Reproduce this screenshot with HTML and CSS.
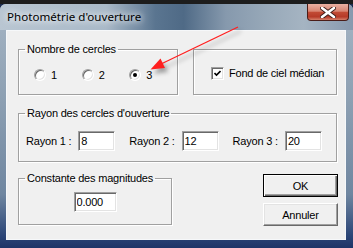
FILE: index.html
```html
<!DOCTYPE html>
<html lang="fr">
<head>
    <meta charset="UTF-8">
    <title>Photométrie d'ouverture</title>
    <link rel="stylesheet" href="styles.css">
</head>
<body>
<div class="screen">
    <div class="topline"></div>
    <div class="window">
        <div class="titlebar">
            <span class="title">Photométrie d'ouverture</span>
            <span class="close">
                <svg width="16" height="11" viewBox="0 0 16 11">
                    <path d="M2 1 L14 10 M14 1 L2 10" stroke="#3a1a16" stroke-width="4.4" stroke-linecap="round"/>
                    <path d="M2 1 L14 10 M14 1 L2 10" stroke="#ffffff" stroke-width="2.6" stroke-linecap="round"/>
                </svg>
            </span>
        </div>
        <div class="client">
            <div class="row-top">
                <fieldset class="group circles">
                    <legend>Nombre de cercles</legend>
                    <div class="options">
                        <label class="option"><span class="radio"></span>1</label>
                        <label class="option"><span class="radio"></span>2</label>
                        <label class="option"><span class="radio checked"></span>3</label>
                    </div>
                </fieldset>
                <div class="group sky">
                    <label class="check-label">
                        <span class="checkbox">
                            <svg width="7" height="7" viewBox="0 0 7 7"><path d="M0.5 3 L2.5 5 L6.5 1" fill="none" stroke="#000" stroke-width="1.6"/></svg>
                        </span>
                        Fond de ciel médian
                    </label>
                </div>
            </div>

            <fieldset class="group radii">
                <legend>Rayon des cercles d'ouverture</legend>
                <div class="fields">
                    <label class="field">Rayon 1 :<input class="edit" value="8"></label>
                    <label class="field">Rayon 2 :<input class="edit" value="12"></label>
                    <label class="field">Rayon 3 :<input class="edit" value="20"></label>
                </div>
            </fieldset>

            <div class="row-bottom">
                <fieldset class="group magnitude">
                    <legend>Constante des magnitudes</legend>
                    <div class="centered"><input class="edit wide" value="0.000"></div>
                </fieldset>
                <div class="buttons">
                    <button class="btn default">OK</button>
                    <button class="btn">Annuler</button>
                </div>
            </div>
        </div>
    </div>
    <!-- red annotation arrow drawn over the dialog -->
    <svg class="arrow" width="353" height="248" viewBox="0 0 353 248">
        <line x1="238" y1="27" x2="160" y2="64.5" stroke="#ff1f1f" stroke-width="1.3"/>
        <polygon points="150.5,69.5 165,68 160.5,58.5" fill="#ff1f1f"/>
    </svg>
</div>
</body>
</html>
```

FILE: styles.css
```css
body {
    margin: 0;
    width: 353px;
    height: 248px;
    overflow: hidden;
    background: #1c2c50;
    font-family: "Liberation Sans", Arial, sans-serif;
    font-size: 11px;
    letter-spacing: -0.2px;
    color: #000;
}
.screen {
    position: relative;
    width: 353px;
    height: 248px;
}
.topline {
    height: 4px;
    background: #1d1d1d;
}
.window {
    height: 244px;
    display: flex;
    flex-direction: column;
    border-radius: 6px 6px 0 0;
    background: linear-gradient(to bottom, #a6b5c4 0%, #8c9fb2 40%, #6f86a0 78%, #2b4577 95%, #1e3467 100%);
}
.titlebar {
    height: 26px;
    display: flex;
    align-items: flex-start;
    border-radius: 6px 6px 0 0;
    background: linear-gradient(to right, #b9c6d2 0%, #a9b9c8 30%, #5a7590 44%, #4f6a86 52%, #8699ad 64%, #98a9b9 76%, #a5b4c2 86%, #8799ae 100%);
}
.title {
    padding: 5px 0 0 7px;
    font-family: "Noto Sans", sans-serif;
    font-size: 11.6px;
    letter-spacing: 0;
    line-height: 16px;
    text-shadow: 0 0 6px #fff, 0 0 10px #fff;
}
.close {
    margin-left: auto;
    margin-right: 4px;
    width: 42px;
    height: 17px;
    box-sizing: border-box;
    border: 1px solid #4a1d18;
    border-top: none;
    border-radius: 0 0 4px 4px;
    background: linear-gradient(to bottom, #eab0a2 0%, #d88572 45%, #c14a34 52%, #b63a28 80%, #d4806a 100%);
    display: flex;
    align-items: center;
    justify-content: center;
}
.client {
    flex: 1;
    margin: 0 7px 8px 6px;
    border: 1px solid #f6f8fa;
    background: #f0f0f0;
    padding: 12px 8px 0 11px;
}
.group {
    margin: 0;
    padding: 0;
    min-width: 0;
    border: 1px solid #a0a0a0;
    box-shadow: inset 1px 1px #fff, 1px 1px #fff;
}
legend {
    margin-left: 6px;
    padding: 0 2px;
    line-height: 13px;
}
.row-top {
    display: flex;
    gap: 15px;
}
.circles {
    width: 160px;
    box-sizing: border-box;
}
.options {
    height: 38px;
    display: flex;
    align-items: center;
    padding-left: 15px;
}
.option {
    width: 51px;
    display: flex;
    align-items: center;
    gap: 5px;
}
.radio {
    width: 12px;
    height: 12px;
    box-sizing: border-box;
    border-radius: 50%;
    background: #fff;
    border: 1px solid;
    border-color: #a0a0a0 #fff #fff #a0a0a0;
    box-shadow: inset 1px 1px #696969, inset -1px -1px #e3e3e3;
    display: flex;
    align-items: center;
    justify-content: center;
}
.radio.checked::after {
    content: "";
    width: 4px;
    height: 4px;
    border-radius: 50%;
    background: #000;
}
.sky {
    flex: 1;
    margin-top: 6px;
    height: 46px;
    box-sizing: border-box;
    display: flex;
    align-items: center;
    padding: 2px 0 0 17px;
}
.check-label {
    display: flex;
    align-items: center;
    gap: 5px;
}
.checkbox {
    width: 13px;
    height: 13px;
    box-sizing: border-box;
    background: #fff;
    border: 1px solid;
    border-color: #a0a0a0 #fff #fff #a0a0a0;
    box-shadow: inset 1px 1px #696969, inset -1px -1px #e3e3e3;
    display: flex;
    align-items: center;
    justify-content: center;
}
.radii {
    margin-top: 12px;
}
.fields {
    height: 41px;
    display: flex;
    align-items: center;
    padding-left: 7px;
    gap: 14px;
}
.field {
    display: flex;
    align-items: center;
    gap: 7px;
}
.edit {
    box-sizing: border-box;
    width: 37px;
    height: 20px;
    padding: 0 2px;
    border: 1px solid;
    border-color: #a0a0a0 #fff #fff #a0a0a0;
    box-shadow: inset 1px 1px #696969, inset -1px -1px #e3e3e3;
    background: #fff;
    font: inherit;
    letter-spacing: inherit;
    color: #000;
    outline: none;
}
.edit.wide {
    width: 43px;
}
.row-bottom {
    margin-top: 10px;
    display: flex;
    justify-content: space-between;
    align-items: flex-start;
}
.magnitude {
    width: 154px;
    box-sizing: border-box;
}
.centered {
    display: flex;
    justify-content: center;
    padding: 7px 0 12px;
}
.buttons {
    margin-top: 2px;
    margin-right: -1px;
    display: flex;
    flex-direction: column;
    gap: 6px;
}
.btn {
    width: 75px;
    height: 23px;
    padding: 0;
    background: #f0f0f0;
    border: 1px solid;
    border-color: #fff #696969 #696969 #fff;
    box-shadow: inset -1px -1px #a0a0a0, inset 1px 1px #e3e3e3;
    font: inherit;
    letter-spacing: inherit;
    color: #000;
}
.btn.default {
    border: 1px solid #000;
    box-shadow: inset 1px 1px #fff, inset -1px -1px #696969, inset -2px -2px #a0a0a0;
}
.arrow {
    position: absolute;
    left: 0;
    top: 0;
    pointer-events: none;
    filter: drop-shadow(3px 4px 2px rgba(0, 0, 0, 0.35));
}
```
